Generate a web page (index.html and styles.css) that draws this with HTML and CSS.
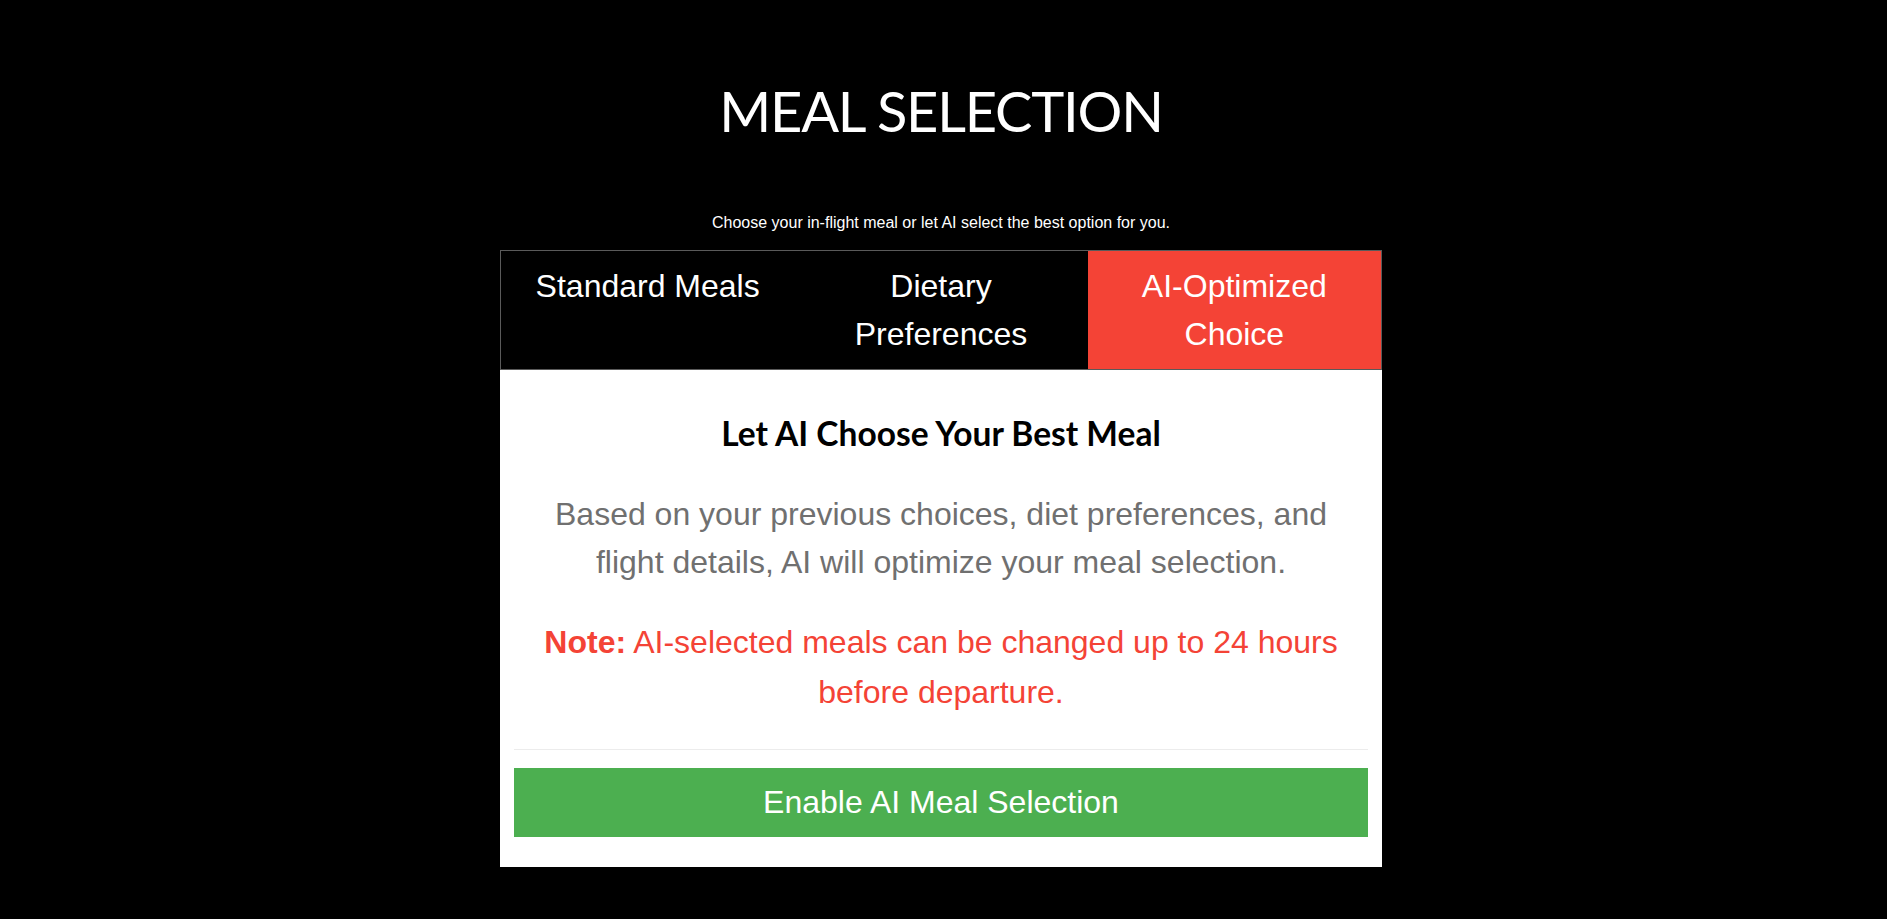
FILE: index.html
```html
<!DOCTYPE html>
<html lang="en">
<head>
<meta charset="utf-8">
<title>Meal Selection</title>
<link rel="stylesheet" href="styles.css">
</head>
<body>
<main class="page">
  <h1 class="page-title">MEAL SELECTION</h1>
  <p class="page-subtitle">Choose your in-flight meal or let AI select the best option for you.</p>
  <section class="card">
    <div class="tabs">
      <button class="tab">Standard Meals</button>
      <button class="tab">Dietary Preferences</button>
      <button class="tab tab-active">AI-Optimized Choice</button>
    </div>
    <div class="panel">
      <h2 class="panel-title">Let AI Choose Your Best Meal</h2>
      <p class="panel-desc">Based on your previous choices, diet preferences, and flight details, AI will optimize your meal selection.</p>
      <p class="panel-note"><strong>Note:</strong> AI-selected meals can be changed up to 24 hours before departure.</p>
      <div class="divider"></div>
      <button class="enable-btn">Enable AI Meal Selection</button>
    </div>
  </section>
</main>
</body>
</html>
```

FILE: styles.css
```css
html, body {
  margin: 0;
  padding: 0;
  background: #000;
}

body {
  font-family: "Liberation Sans", Arial, sans-serif;
  color: #fff;
}

.page {
  display: flex;
  flex-direction: column;
  align-items: center;
  padding-right: 5px;
}

.page-title {
  margin: 76px 0 0;
  font-family: "Lato", "Open Sans", sans-serif;
  font-weight: 400;
  font-size: 56px;
  letter-spacing: -1.2px;
  line-height: 70px;
  color: #fff;
}

.page-subtitle {
  margin: 67px 0 0;
  font-size: 16px;
  line-height: 20px;
  color: #fff;
}

.card {
  margin-top: 17px;
  width: 882px;
  display: flex;
  flex-direction: column;
}

.tabs {
  display: flex;
  align-items: flex-start;
  border: 1px solid #5a5a5a;
  background: #000;
}

.tab {
  flex: 1;
  margin: 0;
  border: 0;
  padding: 11px 10px;
  background: transparent;
  color: #fff;
  font-family: "Liberation Sans", Arial, sans-serif;
  font-size: 32px;
  line-height: 48px;
  text-align: center;
  cursor: pointer;
}

.tab-active {
  background: #f44336;
}

.panel {
  background: #fff;
  padding: 0 14px 30px;
  display: flex;
  flex-direction: column;
  text-align: center;
}

.panel-title {
  margin: 42.5px 0 0;
  font-family: "Lato", "Open Sans", sans-serif;
  font-weight: 700;
  font-size: 33.5px;
  line-height: 40px;
  color: #000;
}

.panel-desc {
  margin: 37px 0 0;
  padding: 0 20px;
  font-size: 32px;
  line-height: 48px;
  color: #707070;
}

.panel-note {
  margin: 31px 0 0;
  padding: 0 20px;
  font-size: 32px;
  line-height: 50px;
  color: #f44336;
}

.divider {
  margin-top: 32px;
  height: 1px;
  background: #ececec;
}

.enable-btn {
  margin-top: 18px;
  border: 0;
  padding: 16px;
  background: #4caf50;
  color: #fff;
  font-family: "Liberation Sans", Arial, sans-serif;
  font-size: 32px;
  line-height: 37px;
  cursor: pointer;
}
```
